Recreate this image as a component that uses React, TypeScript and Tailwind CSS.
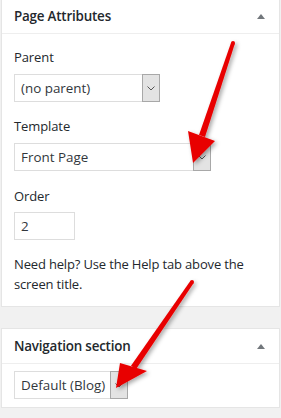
import type { FC } from 'react'

const font = { fontFamily: '"Open Sans", "Noto Sans", Arial, sans-serif' }

const Chevron: FC = () => (
  <svg width="8" height="5" viewBox="0 0 8 5" fill="none">
    <path d="M0.5 0.5 L4 4 L7.5 0.5" stroke="#555" strokeWidth="1" />
  </svg>
)

const Caret: FC = () => (
  <svg width="8" height="5" viewBox="0 0 8 5">
    <path d="M0 5 L4 0 L8 5 Z" fill="#72777c" />
  </svg>
)

// native-looking select with grey button on the right
const Select: FC<{ value: string; width: string }> = ({ value, width }) => (
  <div className={`flex h-[28px] ${width} border border-[#dddddd] bg-white`}>
    <div className="flex-1 pl-[6px] text-[13.4px] leading-[26px] text-[#32373c] whitespace-nowrap">{value}</div>
    <div className="-my-px -mr-px flex w-[18px] items-center justify-center border border-[#a8a8a8] bg-[#e3e3e3]">
      <Chevron />
    </div>
  </div>
)

const PanelHeader: FC<{ title: string; h: string }> = ({ title, h }) => (
  <div className={`flex ${h} items-center justify-between border-b border-[#eeeeee] pl-[12px] pr-[14px]`}>
    <span className="text-[13.4px] font-semibold tracking-[-0.2px] text-[#23282d]">{title}</span>
    <Caret />
  </div>
)

const Label: FC<{ text: string; mt: string }> = ({ text, mt }) => (
  <div className={`${mt} h-[20px] text-[13px] leading-[20px] tracking-[-0.1px] text-[#23282d]`}>{text}</div>
)

export default function App() {
  return (
    <div className="relative h-[418px] w-[281px] overflow-hidden bg-[#f1f1f1]" style={font}>
      {/* Page Attributes */}
      <div className="ml-px w-[279px] border-x border-b border-[#e5e5e5] bg-white">
        <PanelHeader title="Page Attributes" h="h-[34px]" />
        <div className="px-[12px] pb-[12px] pt-[13px]">
          <Label text="Parent" mt="mt-0" />
          <div className="mt-[7px]">
            <Select value="(no parent)" width="w-[146px]" />
          </div>
          <Label text="Template" mt="mt-[14px]" />
          <div className="mt-[7px]">
            <Select value="Front Page" width="w-[197px]" />
          </div>
          <Label text="Order" mt="mt-[15px]" />
          <div className="mt-[6px] h-[28px] w-[61px] border border-[#dddddd] bg-white pl-[6px] text-[13.4px] leading-[26px] text-[#32373c]">
            2
          </div>
          <p className="mt-[14px] text-[13px] leading-[20px] tracking-[-0.16px] text-[#23282d]">
            Need help? Use the Help tab above the screen title.
          </p>
        </div>
      </div>

      {/* Navigation section */}
      <div className="ml-px mt-[21px] w-[279px] border border-[#e5e5e5] bg-white">
        <PanelHeader title="Navigation section" h="h-[35px]" />
        <div className="px-[12px] pb-[8px] pt-[7px]">
          <Select value="Default (Blog)" width="w-[114px]" />
        </div>
      </div>

      {/* red annotation arrows */}
      <svg className="pointer-events-none absolute left-0 top-0" width="281" height="418" viewBox="0 0 281 418">
        <defs>
          <filter id="sh" x="-20%" y="-20%" width="140%" height="140%">
            <feDropShadow dx="2" dy="2" stdDeviation="2" floodColor="#000" floodOpacity="0.35" />
          </filter>
        </defs>
        <g fill="#e80000" filter="url(#sh)">
          <circle cx="233" cy="43" r="2" />
          <polygon points="231.1,42.4 234.9,43.6 205,137 199,135" />
          <polygon points="188,131 215,141 193,163" />
          <circle cx="192" cy="282" r="2" />
          <polygon points="190.3,280.9 193.7,283.1 136,369.2 131,365.8" />
          <polygon points="120,363 147,371 116,388" />
        </g>
      </svg>
    </div>
  )
}
